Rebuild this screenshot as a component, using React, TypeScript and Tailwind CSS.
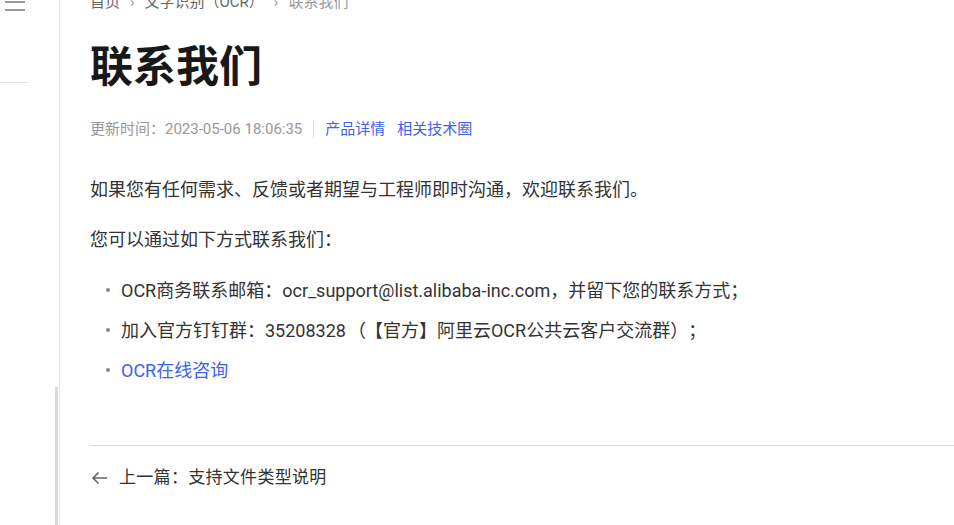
import React from 'react';

const font = { fontFamily: "Roboto, 'Noto Sans CJK SC', sans-serif" };

const App: React.FC = () => {
  const items: { content: React.ReactNode; link: boolean }[] = [
    { content: 'OCR商务联系邮箱：ocr_support@list.alibaba-inc.com，并留下您的联系方式；', link: false },
    {
      content: (
        <>
          加入官方钉钉群：35208328<span className="ml-[2px] mr-[8px]">（</span>【官方】阿里云OCR公共云客户交流群
          <span className="mr-[9px]">）</span>；
        </>
      ),
      link: false,
    },
    { content: 'OCR在线咨询', link: true },
  ];

  return (
    <div className="flex h-[525px] w-[954px] overflow-hidden bg-white" style={font}>
      {/* 侧边栏 */}
      <aside className="relative w-[60px] shrink-0 border-r border-[#e3e3e3]">
        <div className="-mt-[8px] flex w-[20px] flex-col gap-[6.5px] pl-[5px] box-content">
          <span className="block h-[2px] bg-[#9a9a9a]" />
          <span className="block h-[2px] bg-[#9a9a9a]" />
          <span className="block h-[2px] bg-[#9a9a9a]" />
        </div>
        <div className="mt-[71px] h-px w-[29px] bg-[#e3e3e3]" />
        <div className="absolute bottom-0 right-[1px] h-[138px] w-[3px] bg-[#dadada]" />
      </aside>

      {/* 正文 */}
      <main className="flex-1 pl-[30px]">
        <nav className="-mt-[8px] flex h-[20px] items-center text-[15px] text-[#666]">
          <span>首页</span>
          <span className="mx-[10px] text-[#999]">›</span>
          <span>文字识别（OCR）</span>
          <span className="mx-[10px] text-[#999]">›</span>
          <span className="text-[#999]">联系我们</span>
        </nav>

        <h1 className="mt-[26px] text-[43px] font-bold leading-[59px] text-[#181818]">联系我们</h1>

        <div className="mt-[22px] flex h-[20px] items-center text-[15px]">
          <span className="text-[#999]">更新时间：2023-05-06 18:06:35</span>
          <span className="mx-[11px] h-[18px] w-px bg-[#dedede]" />
          <a className="text-[#3d62ee]">产品详情</a>
          <a className="ml-[12px] text-[#3d62ee]">相关技术圈</a>
        </div>

        <p className="mt-[41px] text-[18px] leading-[20px] text-[#333]">
          如果您有任何需求、反馈或者期望与工程师即时沟通，欢迎联系我们。
        </p>
        <p className="mt-[30px] text-[18px] leading-[20px] text-[#333]">您可以通过如下方式联系我们：</p>

        <ul className="mt-[30px] flex flex-col gap-[20px]">
          {items.map((item, i) => (
            <li key={i} className="flex h-[20px] items-center text-[18px] text-[#333]">
              <span className="ml-[16px] mr-[11px] h-[4px] w-[4px] rounded-full bg-[#888]" />
              <span className={item.link ? 'text-[#3d62ee]' : ''}>{item.content}</span>
            </li>
          ))}
        </ul>

        <div className="mt-[65px] border-t border-[#dcdcdc]" />

        <div className="mt-[21px] flex h-[22px] items-center text-[17px] text-[#333]">
          <svg width="17" height="14" viewBox="0 0 17 14" fill="none" className="ml-[1px] mr-[11px]">
            <path d="M16 7H2M7.5 1.5 2 7l5.5 5.5" stroke="#666" strokeWidth="1.6" />
          </svg>
          <span className="tracking-[0.3px]">上一篇：支持文件类型说明</span>
        </div>
      </main>
    </div>
  );
};

export default App;
